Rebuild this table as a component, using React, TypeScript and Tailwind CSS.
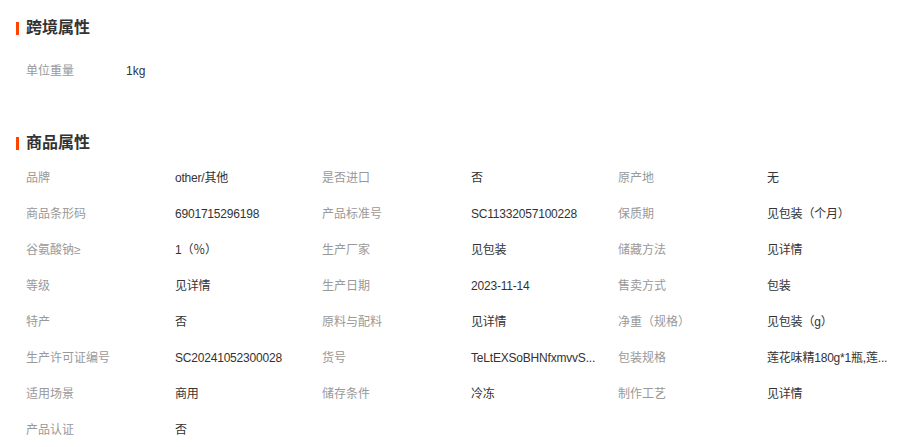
import React from "react";

const font = { fontFamily: '"Liberation Sans", "Noto Sans CJK SC", sans-serif' };

const rows: [string, string][] = [
  ["品牌", "other/其他"],
  ["是否进口", "否"],
  ["原产地", "无"],
  ["商品条形码", "6901715296198"],
  ["产品标准号", "SC11332057100228"],
  ["保质期", "见包装（个月）"],
  ["谷氨酸钠≥", "1（％）"],
  ["生产厂家", "见包装"],
  ["储藏方法", "见详情"],
  ["等级", "见详情"],
  ["生产日期", "2023-11-14"],
  ["售卖方式", "包装"],
  ["特产", "否"],
  ["原料与配料", "见详情"],
  ["净重（规格）", "见包装（g）"],
  ["生产许可证编号", "SC20241052300028"],
  ["货号", "TeLtEXSoBHNfxmvvS..."],
  ["包装规格", "莲花味精180g*1瓶,莲..."],
  ["适用场景", "商用"],
  ["储存条件", "冷冻"],
  ["制作工艺", "见详情"],
  ["产品认证", "否"],
];

function Heading({ title }: { title: string }) {
  return (
    <div className="flex items-center h-[20px]">
      <div className="w-[3px] h-[13px] bg-[#ff4400] ml-[16px]" />
      <div className="ml-[7px] text-[16px] font-bold text-[#333] leading-[20px]">{title}</div>
    </div>
  );
}

export default function App() {
  return (
    <div className="w-[914px] h-[447px] bg-white overflow-hidden" style={font}>
      <div className="pt-[18px]">
        <Heading title="跨境属性" />
      </div>
      <div className="mt-[15px] pl-[26px] flex items-center h-[36px] text-[12px]">
        <div className="w-[100px] text-[#999]">单位重量</div>
        <div className="text-[#333]">1kg</div>
      </div>
      <div className="mt-[44px]">
        <Heading title="商品属性" />
      </div>
      <div className="mt-[7px] pl-[25px] grid grid-cols-[150px_146px_150px_146px_150px_146px] text-[12px]">
        {rows.map(([k, v], i) => (
          <React.Fragment key={i}>
            <div className="h-[36px] flex items-center pl-[1px] text-[#999] whitespace-nowrap">{k}</div>
            <div className="h-[36px] flex items-center text-[#333] whitespace-nowrap tracking-[-0.2px]">{v}</div>
          </React.Fragment>
        ))}
      </div>
    </div>
  );
}
